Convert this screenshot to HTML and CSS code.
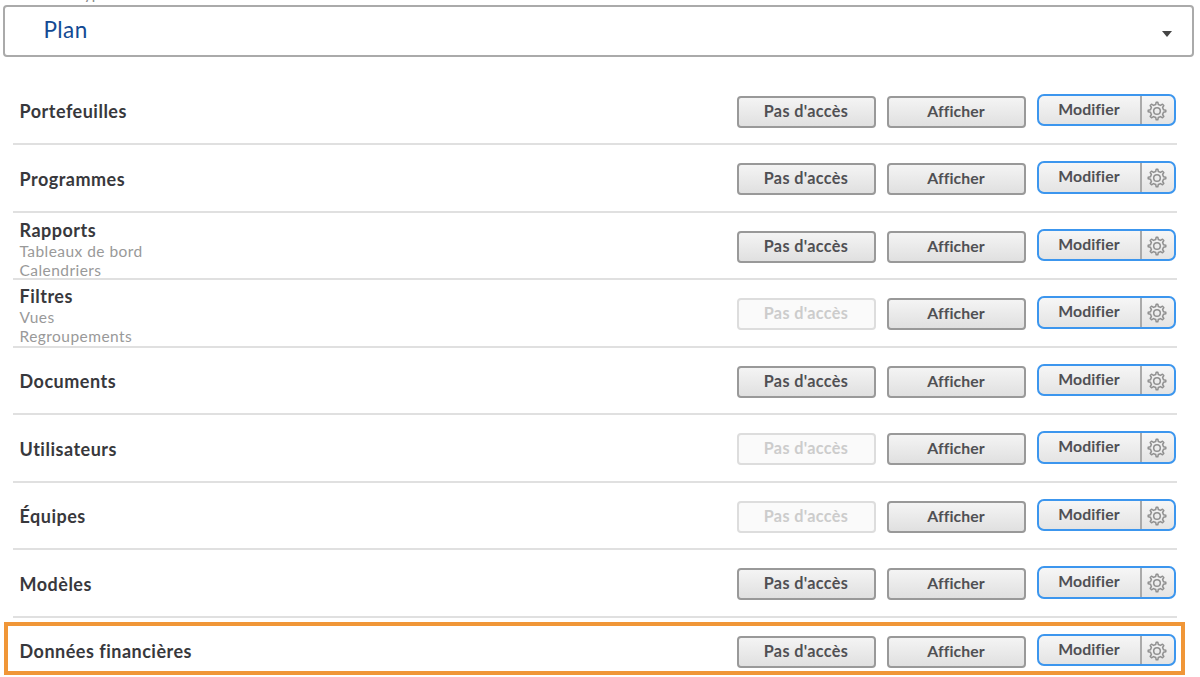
FILE: index.html
```
<!DOCTYPE html>
<html lang="fr">
<head>
<meta charset="utf-8">
<title>Niveau d'accès</title>
<link rel="stylesheet" href="styles.css">
</head>
<body>
<svg width="0" height="0" class="defs"><symbol id="gear" viewBox="0 0 20 20"><path d="M8.7 3.5L9.2 1.2H10.8L11.3 3.5L13.5 4.4L15.5 3.2L16.8 4.5L15.6 6.5L16.5 8.7L18.8 9.2V10.8L16.5 11.3L15.6 13.5L16.8 15.5L15.5 16.8L13.5 15.6L11.3 16.5L10.8 18.8H9.2L8.7 16.5L6.5 15.6L4.5 16.8L3.2 15.5L4.4 13.5L3.5 11.3L1.2 10.8V9.2L3.5 8.7L4.4 6.5L3.2 4.5L4.5 3.2L6.5 4.4Z"/><circle cx="10" cy="10" r="3.3"/></symbol></svg>
<div class="caption"><span>yp</span></div>
<div class="select"><span>Plan</span><i class="caret"></i></div>
<main class="rows" id="rows"></main>
<div class="highlight"></div>
<script src="app.js"></script>
</body>
</html>
```
FILE: styles.css
```
* { box-sizing: border-box; }
body { margin: 0; width: 1200px; height: 677px; overflow: hidden; background: #fff; font-family: Lato, "Open Sans", sans-serif; color: #38383c; position: relative; }
.defs { position: absolute; }
.caption { height: 5px; overflow: hidden; padding-left: 84px; font-size: 15px; line-height: 20px; color: #888; }
.caption span { display: block; margin-top: -17px; }
.select { margin-left: 3px; width: 1191px; height: 52px; border: 2px solid #aaa; border-radius: 4px; display: flex; align-items: center; justify-content: space-between; padding: 0 20px 4px 38.5px; font-size: 22.5px; letter-spacing: .4px; color: #134a93; }
.caret { border: 5.5px solid transparent; border-top: 6px solid #444; border-bottom: 0; margin-top: 9px; }
.rows { margin: 20.5px 0 0 13px; width: 1164px; }
.row { height: 67.5px; border-bottom: 2px solid #e0e0e0; display: flex; padding-left: 6.5px; }
.row:last-child { border: 0; }
.label { width: 717px; padding-top: 21.5px; }
.label.multi { padding-top: 5px; }
.label.filters { padding-top: 3.5px; }
.name { font-size: 18px; line-height: 24px; font-weight: 700; letter-spacing: .5px; }
.sub { font-size: 15.5px; line-height: 19.5px; letter-spacing: .45px; color: #999; }
.btn { width: 139px; height: 32px; margin: 18px 11px 0 0; border: 2px solid #999; border-radius: 4px; background: linear-gradient(#f4f4f4, #e0e0e0); font-size: 16.2px; line-height: 26px; font-weight: 700; letter-spacing: .35px; text-align: center; color: #505054; }
.btn:nth-child(3) { font-size: 15.8px; letter-spacing: .1px; }
.btn.off { border-color: #ddd; background: #fafafa; color: #ccc; }
.split { width: 139px; height: 32.5px; margin-top: 16px; border: 2px solid #3c96ee; border-radius: 7px; background: linear-gradient(#f6f6f6, #e4e4e4); display: flex; color: #505054; font-size: 15.8px; line-height: 26px; font-weight: 700; letter-spacing: .1px; }
.split span { width: 103px; border-right: 2px solid #aaa; text-align: center; }
.split svg { width: 20px; height: 20px; margin: 5px 0 0 5px; fill: none; stroke: #909090; stroke-width: 1.5; stroke-linejoin: round; }
.highlight { position: absolute; left: 4px; top: 622px; width: 1181px; height: 53px; border: 4px solid #f09637; }
```
FILE: app.js
```
const items = [
  ["Portefeuilles"], ["Programmes"],
  ["Rapports", "Tableaux de bord", "Calendriers"],
  ["Filtres", "Vues", "Regroupements"],
  ["Documents"], ["Utilisateurs"], ["Équipes"], ["Modèles"], ["Données financières"]
];
const locked = ["Filtres", "Utilisateurs", "Équipes"];
document.getElementById("rows").innerHTML = items.map(([name, ...subs]) => `
  <div class="row">
    <div class="label${subs.length ? " multi" : ""}${name === "Filtres" ? " filters" : ""}"><div class="name"><span>${name}</span></div>${subs.map(s => `<div class="sub">${s}</div>`).join("")}</div>
    <div class="btn${locked.includes(name) ? " off" : ""}">Pas d'accès</div>
    <div class="btn">Afficher</div>
    <div class="split"><span>Modifier</span><svg><use href="#gear"/></svg></div>
  </div>`).join("");
```
